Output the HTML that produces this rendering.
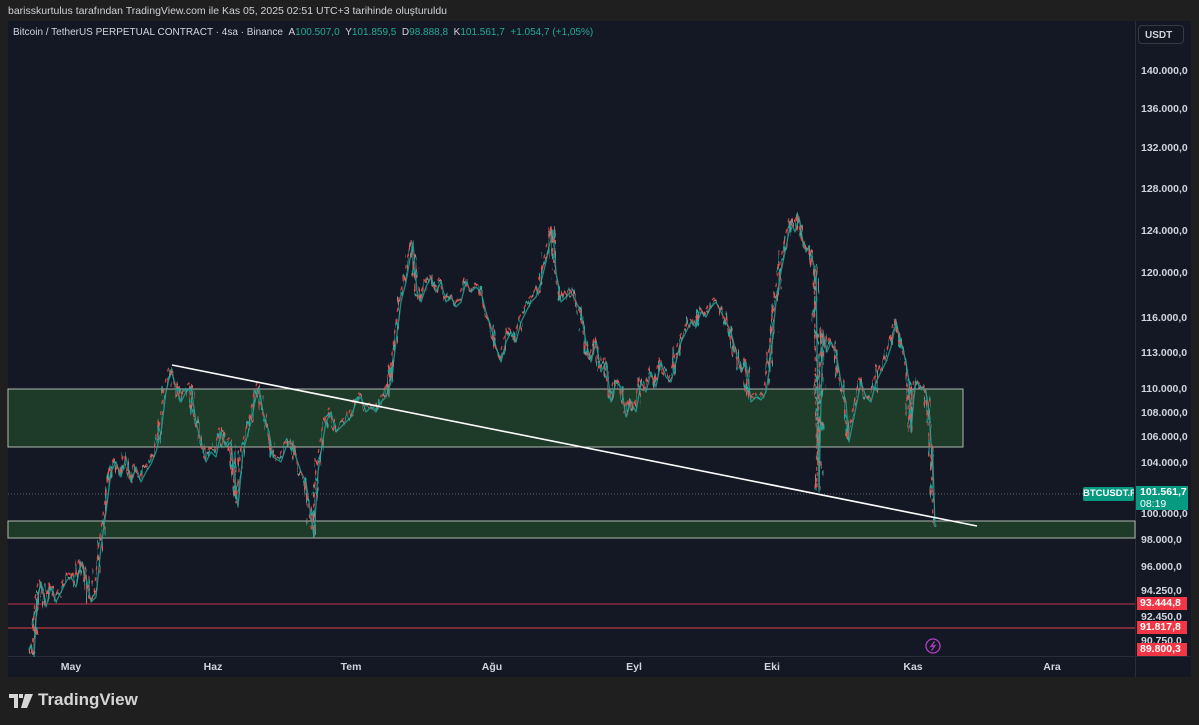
<!DOCTYPE html>
<html><head><meta charset="utf-8"><style>
body{margin:0;width:1199px;height:725px;background:#1f1f1f;overflow:hidden;font-family:"Liberation Sans",sans-serif;position:relative}
.t{position:absolute;color:#d1d4dc;white-space:nowrap}
.p{position:absolute;left:1141px;font-size:10.5px;color:#d1d4dc;font-weight:bold;transform:translateY(-50%)}
.m{position:absolute;top:661px;font-size:10.5px;color:#d1d4dc;font-weight:bold;transform:translateX(-50%)}
.lab{position:absolute;left:1137px;width:47px;height:13px;color:#fff;font-size:10.5px;font-weight:bold;padding-left:3px;line-height:13px}
</style></head><body>
<div class="t" style="left:8px;top:5px;font-size:10.5px;color:#cfd2d8">barisskurtulus tarafından TradingView.com ile Kas 05, 2025 02:51 UTC+3 tarihinde oluşturuldu</div>
<div style="position:absolute;left:8px;top:21px;width:1183px;height:656px;background:#141824"></div>
<div style="position:absolute;left:1135px;top:21px;width:1px;height:656px;background:#2a2e39"></div>
<div style="position:absolute;left:8px;top:656px;width:1183px;height:1px;background:#2a2e39"></div>
<div style="position:absolute;left:1138px;top:25px;width:46px;height:19px;border:1px solid #363a45;border-radius:4px;background:#131722;color:#d1d4dc;font-size:10px;font-weight:bold;line-height:19px;padding-left:6px;box-sizing:border-box">USDT</div>
<div class="t" style="left:13px;top:27px;font-size:10px">Bitcoin / TetherUS PERPETUAL CONTRACT · 4sa · Binance &nbsp;A<span style="color:#22ab94">100.507,0</span> &nbsp;Y<span style="color:#22ab94">101.859,5</span> &nbsp;D<span style="color:#22ab94">98.888,8</span> &nbsp;K<span style="color:#22ab94">101.561,7 &nbsp;+1.054,7 (+1,05%)</span></div>
<svg style="position:absolute;left:0;top:0" width="1199" height="725">
<defs>
<filter id="jit" x="-5%" y="-10%" width="110%" height="120%">
<feTurbulence type="fractalNoise" baseFrequency="0.35 0.05" numOctaves="2" seed="3"/>
<feDisplacementMap in="SourceGraphic" scale="14" xChannelSelector="R" yChannelSelector="G"/>
</filter>
<polyline id="pp" points="33,655 36,600 40,580 45,605 50,585 55,600 60,590 66,578 70,575 75,585 80,560 85,575 90,600 95,595 100,545 105,510 110,470 115,460 120,475 125,455 130,480 135,465 140,480 145,470 150,462 155,450 160,430 165,390 170,368 175,385 180,400 185,390 190,385 195,420 200,440 205,460 210,450 215,455 220,430 225,445 230,440 237,505 242,450 250,420 255,395 258,385 262,410 268,430 272,455 280,460 285,445 290,440 295,455 300,470 305,480 313,535 317,470 320,450 325,420 330,410 335,430 340,425 345,420 350,415 355,400 360,395 365,410 370,405 375,410 380,400 385,395 390,380 395,340 400,300 405,280 412,240 416,290 420,300 425,285 430,275 435,290 440,280 445,300 450,295 455,305 460,300 465,280 470,290 475,285 480,290 485,310 490,325 495,345 500,360 505,340 510,330 515,340 520,320 525,310 530,300 535,295 540,280 545,260 548,245 552,228 555,270 560,300 565,295 570,290 575,300 580,310 585,340 590,360 595,340 600,370 605,360 610,400 615,380 620,385 625,415 630,400 635,410 640,380 645,390 650,370 655,385 660,360 665,375 670,380 675,360 680,340 685,330 690,320 695,325 700,310 705,315 710,305 715,300 720,310 725,320 730,330 735,350 740,370 745,360 750,400 755,395 760,398 765,390 768,370 772,330 775,300 780,270 785,245 790,220 794,230 798,215 802,240 805,250 808,245 812,260 815,270 818,490 820,400 822,330 826,350 830,340 835,350 840,380 845,400 848,440 852,420 856,400 860,380 865,395 870,400 875,380 880,370 885,360 890,345 895,320 900,340 905,360 908,380 910,430 913,395 915,380 920,385 925,390 928,410 930,440 932,460 934,525"/>
</defs>
<rect x="8" y="389" width="955" height="58" fill="#1e3a28" stroke="#b0b8b0" stroke-width="1"/>
<rect x="8" y="521" width="1127" height="17" fill="#1e3a28" stroke="#b0b8b0" stroke-width="1"/>
<line x1="8" y1="604" x2="1135" y2="604" stroke="#c0334a" stroke-width="1"/>
<line x1="8" y1="628" x2="1135" y2="628" stroke="#e0404a" stroke-width="1"/>
<line x1="8" y1="494" x2="1135" y2="494" stroke="#5d6270" stroke-width="1" stroke-dasharray="1 2"/>
<g fill="none" stroke-linejoin="round" stroke-width="1.6" filter="url(#jit)">
<use href="#pp" stroke="#26a69a"/>
<use href="#pp" stroke="#ef5350" stroke-dasharray="5 6"/>
<use href="#pp" stroke="#9a8f8f" stroke-dasharray="3 13" opacity=".8"/>
</g>
<g fill="none" stroke-linejoin="round" stroke-width="1.3" opacity=".8">
<use href="#pp" stroke="#26a69a" transform="translate(1,2)"/>
<use href="#pp" stroke="#ef5350" stroke-dasharray="4 7" transform="translate(-1,-2)"/>
</g>
<line x1="172" y1="365" x2="977" y2="526" stroke="#ffffff" stroke-width="1.6"/>
<circle cx="933" cy="646" r="7" fill="none" stroke="#b23fc7" stroke-width="1.3"/>
<path d="M934.5 641.5 L931 646.5 L935 645.5 L931.5 650.5" fill="none" stroke="#b23fc7" stroke-width="1.2"/>
</svg>
<div class="p" style="top:71px">140.000,0</div>
<div class="p" style="top:109px">136.000,0</div>
<div class="p" style="top:148px">132.000,0</div>
<div class="p" style="top:189px">128.000,0</div>
<div class="p" style="top:231px">124.000,0</div>
<div class="p" style="top:273px">120.000,0</div>
<div class="p" style="top:318px">116.000,0</div>
<div class="p" style="top:353px">113.000,0</div>
<div class="p" style="top:389px">110.000,0</div>
<div class="p" style="top:413px">108.000,0</div>
<div class="p" style="top:437px">106.000,0</div>
<div class="p" style="top:463px">104.000,0</div>
<div class="p" style="top:514px">100.000,0</div>
<div class="p" style="top:540px">98.000,0</div>
<div class="p" style="top:567px">96.000,0</div>
<div class="p" style="top:591px">94.250,0</div>
<div class="p" style="top:617px">92.450,0</div>
<div class="p" style="top:641px">90.750,0</div>
<div style="position:absolute;left:1083px;top:487px;width:51px;height:14px;background:#089981;color:#fff;font-size:9.5px;font-weight:bold;line-height:14px;text-align:center;border-radius:2px;overflow:hidden">BTCUSDT.P</div>
<div style="position:absolute;left:1136px;top:486px;width:52px;height:24px;background:#089981;color:#fff;font-size:10.5px;font-weight:bold;line-height:12px;padding-left:4px;box-sizing:border-box">101.561,7<br><span style="font-weight:normal">08:19</span></div>
<div class="lab" style="top:597px;background:#f23645">93.444,8</div>
<div class="lab" style="top:621px;background:#f23645">91.817,8</div>
<div class="lab" style="top:643px;background:#f23645">89.800,3</div>
<div class="m" style="left:71px">May</div>
<div class="m" style="left:213px">Haz</div>
<div class="m" style="left:351px">Tem</div>
<div class="m" style="left:492px">Ağu</div>
<div class="m" style="left:634px">Eyl</div>
<div class="m" style="left:772px">Eki</div>
<div class="m" style="left:913px">Kas</div>
<div class="m" style="left:1052px">Ara</div>
<svg style="position:absolute;left:9px;top:694px" width="24" height="14"><path d="M0 0H9V14H5V4H0Z M10 0H14V4H10Z M16 0H24L18 14H12Z" fill="#d6d6d6"/></svg>
<div class="t" style="left:38px;top:690px;font-size:17px;font-weight:bold;color:#d6d6d6">TradingView</div>
</body></html>
